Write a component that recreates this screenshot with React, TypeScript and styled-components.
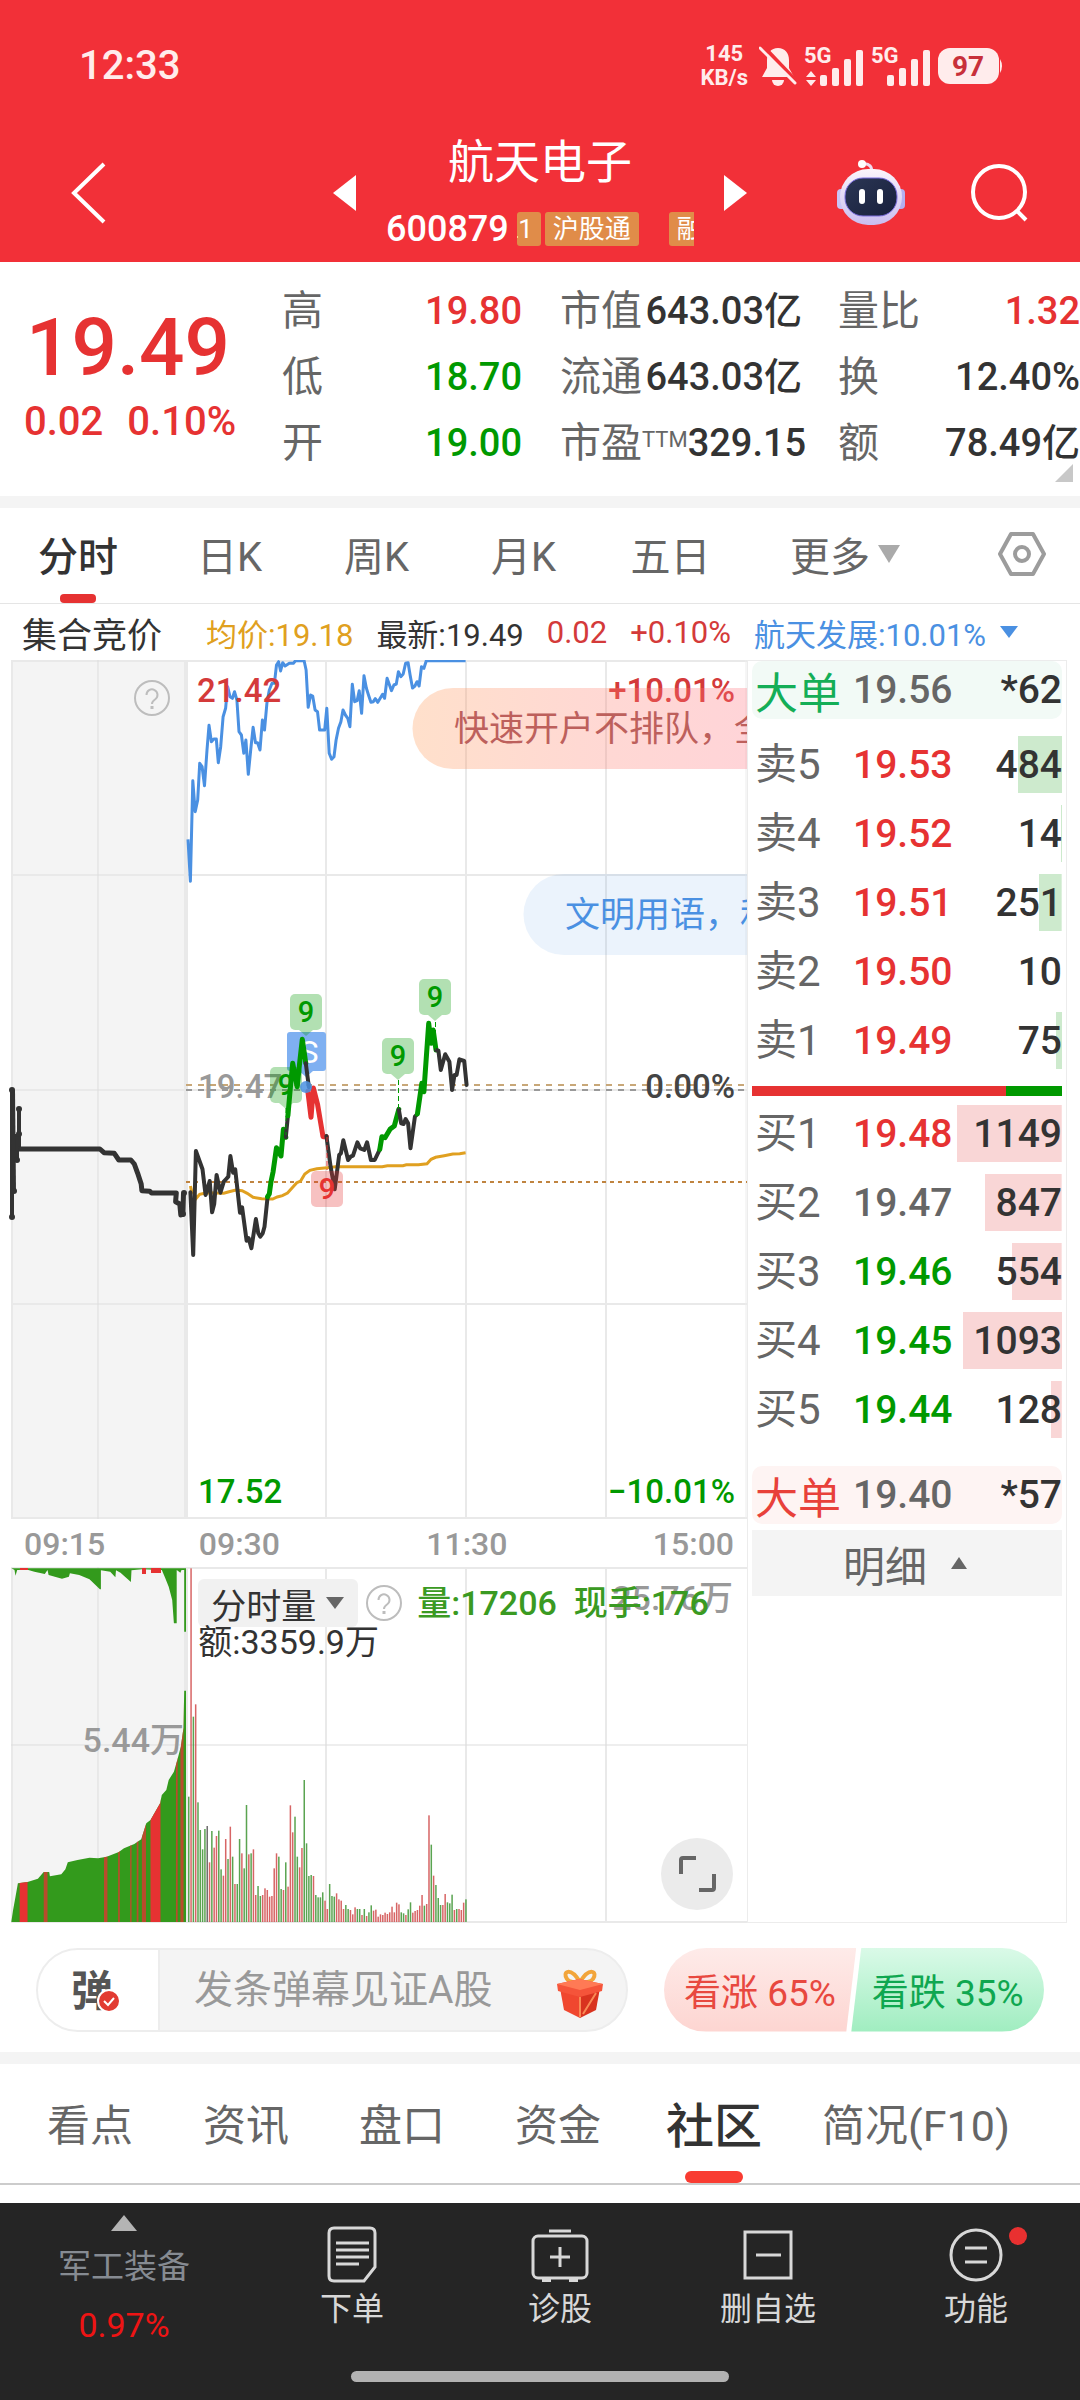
import React from "react";
import styled, { createGlobalStyle } from "styled-components";

const RED = "#e63232";
const GREEN = "#009900";
const INK = "#333333";
const GREY = "#666666";
const MUTED = "#999999";
const BLUE = "#4a90e2";

const Global = createGlobalStyle`
  *, *::before, *::after { box-sizing: border-box; }
  body { margin: 0; background: #fff; }
  body, button, input {
    font-family: Roboto, "Noto Sans CJK SC", sans-serif;
  }
  button { border: 0; padding: 0; margin: 0; background: none; color: inherit; cursor: pointer; }
  svg { display: block; }
`;

const Page = styled.div`
  width: 100%;
  color: ${INK};
  overflow: hidden;
`;

/* ---------- header ---------- */

const Header = styled.header`
  background: #f23038;
  color: #fff;
`;

const StatusBar = styled.div`
  height: 130px;
  display: flex;
  justify-content: space-between;
  align-items: center;
  padding: 2px 76px 0 79px;
`;

const Clock = styled.div`
  font-size: 40px;
  line-height: 40px;
  font-weight: 500;
  color: #ffecec;
`;

const StatusIcons = styled.div`
  display: flex;
  align-items: center;
  gap: 7px;
  color: #ffecec;
`;

const Speed = styled.div`
  font-size: 22px;
  line-height: 24px;
  font-weight: 700;
  text-align: center;
  margin-right: 4px;
`;

const NavBar = styled.div`
  height: 132px;
  display: grid;
  grid-template-columns: 1fr 414px 1fr;
  align-items: center;
  padding-bottom: 6px;
`;

const BackButton = styled.button`
  justify-self: start;
  padding-left: 70px;
`;

const Title = styled.div`
  display: flex;
  justify-content: space-between;
  align-items: center;
`;

const TitleText = styled.div`
  display: flex;
  flex-direction: column;
  align-items: center;
  gap: 22px;
  padding-bottom: 4px;
`;

const StockName = styled.h1`
  margin: 0;
  font-size: 46px;
  line-height: 54px;
  font-weight: 400;
`;

const CodeRow = styled.div`
  display: flex;
  align-items: center;
  gap: 8px;
  width: 308px;
`;

const Code = styled.span`
  font-size: 36px;
  line-height: 36px;
  font-weight: 500;
`;

const TagStrip = styled.div`
  flex: 1;
  min-width: 0;
  display: flex;
  align-items: center;
  overflow: hidden;
`;

const Tag = styled.span<{ $cut?: boolean; $gap?: boolean }>`
  flex: none;
  width: ${(p) => (p.$cut ? "24px" : "auto")};
  display: flex;
  justify-content: flex-end;
  overflow: hidden;
  margin-right: ${(p) => (p.$gap ? "30px" : "4px")};
  padding: 0 8px;
  border-radius: 3px;
  background: #e08c49;
  font-size: 26px;
  line-height: 34px;
`;

const NavActions = styled.div`
  display: flex;
  justify-content: flex-end;
  align-items: center;
  gap: 64px;
  padding-right: 50px;
`;

/* ---------- quote ---------- */

const Quote = styled.section`
  position: relative;
  display: grid;
  grid-template-columns:
    minmax(0, 282fr) minmax(0, 240fr) minmax(0, 38fr)
    minmax(0, 242fr) minmax(0, 36fr) minmax(0, 242fr);
  height: 234px;
  padding-top: 16px;
`;

const Last = styled.div`
  display: flex;
  flex-direction: column;
  padding: 24px 0 0 24px;
  color: ${RED};
`;

const LastPrice = styled.strong`
  width: 208px;
  text-align: center;
  font-size: 80px;
  line-height: 92px;
  font-weight: 500;
`;

const LastChange = styled.div`
  display: flex;
  gap: 24px;
  font-size: 40px;
  line-height: 56px;
  font-weight: 500;
`;

const Stats = styled.dl<{ $col: number }>`
  grid-column: ${(p) => p.$col};
  margin: 0;
  display: flex;
  flex-direction: column;
`;

const Stat = styled.div`
  display: flex;
  justify-content: space-between;
  align-items: center;
  height: 66px;
  white-space: nowrap;
  dt { font-size: 41px; line-height: 66px; color: ${GREY}; }
  sup { font-size: 22px; line-height: 22px; vertical-align: 10px; }
`;

const Value = styled.dd<{ $color?: string }>`
  margin: 0;
  font-size: 38px;
  line-height: 66px;
  font-weight: 500;
  color: ${(p) => p.$color ?? INK};
`;

const Corner = styled.i`
  position: absolute;
  right: 7px;
  bottom: 14px;
  border-left: 18px solid transparent;
  border-bottom: 18px solid #c8c8c8;
`;

const Divider = styled.div`
  height: 12px;
  background: #f4f4f4;
`;

/* ---------- period tabs ---------- */

const PeriodTabs = styled.nav`
  display: flex;
  height: 96px;
  border-bottom: 1px solid #e5e5e5;
`;

const PeriodTab = styled.button<{ $grow: number; $active?: boolean }>`
  flex: ${(p) => p.$grow} 1 0;
  min-width: 0;
  position: relative;
  display: flex;
  justify-content: center;
  align-items: center;
  gap: 8px;
  padding-bottom: 4px;
  font-size: 40px;
  font-weight: ${(p) => (p.$active ? 500 : 400)};
  color: ${(p) => (p.$active ? INK : GREY)};
  &::after {
    content: "";
    display: ${(p) => (p.$active ? "block" : "none")};
    position: absolute;
    bottom: 0;
    width: 36px;
    height: 9px;
    border-radius: 4px;
    background: ${RED};
  }
`;

const SettingsTab = styled(PeriodTab)`
  padding-left: 18px;
`;

const Triangle = styled.i<{ $w: number; $h: number; $color: string; $up?: boolean }>`
  display: inline-block;
  border-left: ${(p) => p.$w}px solid transparent;
  border-right: ${(p) => p.$w}px solid transparent;
  border-top: ${(p) => (p.$up ? "0" : `${p.$h}px solid ${p.$color}`)};
  border-bottom: ${(p) => (p.$up ? `${p.$h}px solid ${p.$color}` : "0")};
`;

const InfoRow = styled.div`
  display: flex;
  align-items: center;
  height: 56px;
  padding: 0 22px;
  font-size: 31px;
  white-space: nowrap;
`;

const InfoTitle = styled.span`
  font-size: 35px;
  width: 184px;
`;

const InfoItem = styled.span<{ $color?: string }>`
  color: ${(p) => p.$color ?? INK};
  margin-right: 23px;
`;

const PeerButton = styled.button`
  display: flex;
  align-items: center;
  gap: 14px;
  font-size: 31px;
  color: ${BLUE};
`;

/* ---------- main area ---------- */

const Main = styled.main`
  display: grid;
  grid-template-columns: minmax(0, 747fr) minmax(0, 333fr);
`;

const Charts = styled.div`
  display: flex;
  flex-direction: column;
`;

const ChartBox = styled.div`
  position: relative;
  > svg { width: 100%; height: auto; }
`;

const HelpCorner = styled.div`
  position: absolute;
  left: 18%;
  top: 20px;
`;

const TimeAxis = styled.div`
  display: grid;
  grid-template-columns: repeat(4, 1fr);
  height: 48px;
  line-height: 50px;
  font-size: 32px;
  font-weight: 500;
  color: ${MUTED};
`;

const Tick = styled.span<{ $align?: string }>`
  text-align: ${(p) => p.$align ?? "left"};
  padding: ${(p) => (p.$align === "right" ? "0 13px 0 0" : p.$align ? "0" : "0 0 0 12px")};
  &:first-child { padding-left: 24px; }
`;

const VolumeInfo = styled.div`
  position: absolute;
  left: 26%;
  top: 12px;
  font-size: 34px;
  line-height: 34px;
  white-space: nowrap;
`;

const VolumeLine = styled.div`
  display: flex;
  align-items: center;
  gap: 8px;
  height: 48px;
  color: #3a9a22;
  margin-left: 4px;
`;

const VolumeText = styled.span`
  margin: 0 2px 0 7px;
  font-weight: 500;
`;

const IndicatorButton = styled.button`
  display: flex;
  align-items: center;
  justify-content: space-between;
  width: 160px;
  height: 48px;
  padding: 0 14px 0 13px;
  border-radius: 6px;
  background: #f1f1f1;
  font-size: 35px;
  color: ${INK};
`;

const TurnoverLine = styled.div`
  margin: -2px 0 0 4px;
`;

const ExpandButton = styled.button`
  position: absolute;
  right: 14px;
  bottom: 13px;
  width: 72px;
  height: 72px;
  display: flex;
  align-items: center;
  justify-content: center;
  border-radius: 50%;
  background: #ebebeb;
`;

const BookBox = styled.aside`
  margin-right: 13px;
  padding: 0 4px;
  border: 1px solid #ececec;
`;

const BookTable = styled.table`
  width: 100%;
  border-collapse: collapse;
  table-layout: fixed;
`;

const BookRow = styled.tr`
  height: 69px;
`;

const Side = styled.th`
  width: 101px;
  padding: 0 0 0 3px;
  text-align: left;
  font-size: 42px;
  line-height: 56px;
  font-weight: 400;
  color: ${GREY};
`;

const Price = styled.td<{ $color: string }>`
  width: 101px;
  padding: 0;
  font-size: 39px;
  line-height: 56px;
  font-weight: 500;
  color: ${(p) => p.$color};
`;

const Qty = styled.td<{ $tint: string }>`
  padding: 0;
  text-align: right;
  font-size: 39px;
  line-height: 56px;
  font-weight: 500;
  color: ${INK};
  background: linear-gradient(${(p) => p.$tint}, ${(p) => p.$tint}) no-repeat right center;
`;

const BigOrder = styled.div<{ $bg: string; $color: string }>`
  display: flex;
  align-items: center;
  height: 58px;
  padding-left: 3px;
  border-radius: 10px;
  background: ${(p) => p.$bg};
  font-size: 39px;
  font-weight: 500;
  color: ${INK};
  b { width: 98px; font-size: 43px; font-weight: 400; color: ${(p) => p.$color}; }
  span { flex: 1; color: ${GREY}; }
  em { font-style: normal; }
`;

const Ratio = styled.div`
  display: flex;
  height: 10px;
  margin: 11px 0 3px;
  background: ${GREEN};
`;

const RatioBuy = styled.div`
  background: ${RED};
`;

const BookGap = styled.div<{ $h: number }>`
  height: ${(p) => p.$h}px;
`;

const DetailButton = styled.button`
  display: flex;
  align-items: center;
  justify-content: center;
  gap: 24px;
  width: 100%;
  height: 66px;
  margin-top: 6px;
  padding-right: 4px;
  background: #f4f4f4;
  font-size: 42px;
  color: ${GREY};
`;

/* ---------- comment bar ---------- */

const CommentBar = styled.section`
  display: flex;
  align-items: center;
  gap: 36px;
  height: 129px;
  padding: 4px 36px 0;
`;

const CommentPill = styled.div`
  flex: 590 1 0;
  min-width: 0;
  display: flex;
  height: 84px;
  border: 2px solid #ededed;
  border-radius: 42px;
  overflow: hidden;
  background: #f4f4f4;
`;

const DanmuToggle = styled.button`
  position: relative;
  width: 122px;
  flex: none;
  padding: 0 12px 4px 0;
  background: #fff;
  border-right: 2px solid #ededed;
  font-size: 42px;
  font-weight: 700;
  color: #555;
  svg { position: absolute; left: 59px; top: 39px; }
`;

const CommentInput = styled.input`
  flex: 1;
  min-width: 0;
  border: 0;
  outline: 0;
  padding: 0 0 0 34px;
  background: none;
  font-size: 39px;
  &::placeholder { color: ${MUTED}; opacity: 1; }
`;

const GiftButton = styled.button`
  padding: 8px 22px 0 0;
`;

const Vote = styled.div`
  flex: 382 1 0;
  display: flex;
  height: 84px;
  border-radius: 42px;
  overflow: hidden;
`;

const VoteUp = styled.button`
  flex: 1;
  margin-right: -5px;
  background: linear-gradient(#feebe9, #fdd5d1);
  clip-path: polygon(0 0, 100% 0, calc(100% - 10px) 100%, 0 100%);
  font-size: 37px;
  color: #e8483f;
`;

const VoteDown = styled(VoteUp)`
  margin: 0;
  background: linear-gradient(#dafae8, #a0edc0);
  clip-path: polygon(10px 0, 100% 0, 100% 100%, 0 100%);
  color: #0fa750;
`;

/* ---------- section tabs ---------- */

const SectionTabs = styled.nav`
  display: flex;
  height: 121px;
  padding: 0 40px 0 12px;
  border-bottom: 2px solid #cccccc;
`;

const SectionTab = styled.button<{ $active?: boolean; $grow: number }>`
  flex: ${(p) => p.$grow} 1 0;
  position: relative;
  display: flex;
  align-items: center;
  justify-content: center;
  padding-bottom: 3px;
  font-size: ${(p) => (p.$active ? 48 : 43)}px;
  font-weight: ${(p) => (p.$active ? 500 : 400)};
  color: ${(p) => (p.$active ? INK : GREY)};
  white-space: nowrap;
  &::after {
    content: "";
    display: ${(p) => (p.$active ? "block" : "none")};
    position: absolute;
    bottom: 0;
    width: 58px;
    height: 12px;
    border-radius: 6px;
    background: #f93c32;
  }
`;

/* ---------- bottom bar ---------- */

const BottomBar = styled.footer`
  margin-top: 18px;
  padding-bottom: 18px;
  background: #252525;
  color: #d8d8d8;
`;

const BottomItems = styled.div`
  display: grid;
  grid-template-columns: 248fr 208fr 208fr 208fr 208fr;
  height: 168px;
`;

const IndexButton = styled.button`
  display: flex;
  flex-direction: column;
  align-items: center;
  padding-top: 12px;
  font-size: 33px;
  line-height: 48px;
  color: #868b92;
  i { margin-bottom: 12px; }
`;

const IndexChange = styled.span`
  margin-top: 10px;
  font-size: 34px;
  line-height: 48px;
  color: #ee1414;
`;

const BottomButton = styled.button`
  position: relative;
  display: flex;
  flex-direction: column;
  align-items: center;
  gap: 2px;
  padding-top: 22px;
  font-size: 32px;
  line-height: 44px;
`;

const Dot = styled.i`
  position: absolute;
  left: 66%;
  top: 24px;
  width: 18px;
  height: 18px;
  border-radius: 50%;
  background: #e93030;
`;

const HomeBar = styled.div`
  width: 35%;
  height: 11px;
  margin: 0 auto;
  border-radius: 6px;
  background: #b2b2b2;
`;

/* ---------- chart data ---------- */

// Samples are "x,y" pairs on a fine grid: 2.904 units per px across, 3 per px down.
const UX = 2.904;
const UY = 3;
const line = (top: number, data: string) =>
  data
    .trim()
    .split(/\s+/)
    .map((p) => {
      const [x, y] = p.split(",").map(Number);
      return `${(x / UX).toFixed(1)},${(top + y / UY).toFixed(1)}`;
    })
    .join(" ");

const PEER = line(640, `546,598 553,724 560,422 567,515 574,480 580,370 587,380 594,437 601,330 607,256
614,305 621,297 628,297 634,368 641,320 648,230 655,205 661,140 668,170 675,175 681,155 688,180 694,275
701,285 708,340 714,300 721,403 728,330 735,262 742,308 748,308 755,330 762,240 768,270 775,190 782,150
790,130 797,130 803,75 809,65 815,93 821,68 828,78 840,70 852,70 858,62 883,62 889,90 895,202 902,165
908,168 915,210 922,215 928,270 943,270 949,205 956,340 963,358 970,350 976,300 983,265 990,245 996,210
1003,225 1010,235 1016,260 1023,133 1030,185 1037,182 1043,152 1050,220 1057,107 1064,145 1070,165
1077,187 1084,185 1090,176 1097,187 1104,175 1111,163 1117,175 1124,115 1131,135 1137,152 1144,135
1151,132 1157,95 1164,110 1171,102 1178,70 1185,68 1191,105 1198,144 1205,138 1211,125 1217,138 1224,80
1231,85 1238,62 1352,62`);

const AVERAGE = line(1000, `553,558 556,572 563,580 570,595 580,583 600,578 650,580 665,575 685,570 703,572
718,580 735,592 760,596 792,597 805,591 820,587 835,579 850,562 862,548 873,543 885,522 900,511 920,506
950,503 975,500 1110,500 1125,497 1170,497 1180,494 1215,494 1240,491 1252,478 1265,472 1290,467 1315,462
1335,461 1352,458`);

const PRICE_SEGMENTS: [string, string][] = [
  [INK, `553,577 561,765 569,453 588,508 597,585 609,543 616,637 622,612 629,525 640,578 650,545 657,537
    663,530 669,468 677,518 683,508 697,638 703,622 716,722 722,714 730,745 743,657 750,700 756,710 763,700
    768,680 777,590`],
  [GREEN, "777,590 782,582 787,545 793,515 803,443 816,468 823,388 830,412"],
  [INK, "830,412 836,347"],
  [GREEN, "836,347 843,265 850,190 863,260 870,190 878,118 888,190"],
  [INK, "888,190 897,262"],
  [RED, "894,275 903,352 910,264 922,312 938,410 948,410"],
  [INK, `948,408 960,500 972,568 985,465 990,460 997,421 1011,480 1018,470 1025,467 1038,427 1046,445
    1058,450 1066,427 1077,480 1088,480 1103,448`],
  [GREEN, "1103,448 1109,410 1118,413 1133,387 1145,378 1158,328"],
  [INK, "1158,328 1165,370 1172,372 1178,357 1185,370 1192,445 1205,350 1212,342"],
  [GREEN, "1212,342 1225,250 1231,275 1245,70 1252,130 1258,90 1266,150"],
  [INK, "1266,150 1273,152 1280,210 1293,163 1305,185 1313,270 1320,225 1326,225 1334,178 1348,183 1355,255"],
];

const AUCTION = line(1000, `55,447 290,447 302,458 332,460 345,480 380,480 390,492 400,520 410,552 412,572
435,574 440,579 512,579 510,605 522,612 525,645 531,643 533,579`);

const AUCTION_DOTS = [[12, 1090], [12, 1217], [14, 1191], [17, 1160], [19, 1134], [19, 1109], [184, 1193], [183, 1214]];

const AUCTION_VOLUME = line(1460, `33,1386 33,1384 38,1350 45,1310 52,1270 80,1266 110,1256 127,1236 143,1236
145,1249 178,1243 190,1228 197,1207 225,1200 260,1193 285,1195 310,1190 345,1176 360,1165 390,1152 410,1138
425,1090 437,1080 465,1030 470,1005 483,990 490,960 505,935 515,900 525,860 533,803 535,692 540,692 540,1386`);

const AUCTION_UNMATCHED = line(1460, `33,325 42,330 45,347 50,330 80,329 100,335 130,342 138,330 141,345 180,356
200,350 203,340 230,345 260,358 290,388 293,388 293,331 320,335 335,352 337,331 350,338 380,366 382,331
412,328 470,330 480,355 490,380 500,420 505,490 513,490 513,330 524,338 527,330 535,330 535,515 540,515 540,325`);

const RED_STRIPES = [[57, 80], [127, 138], [302, 312], [343, 348], [378, 382], [397, 402], [412, 424], [437, 466], [511, 516], [524, 533]];

const VOLUME = `1010g 325r 770g 733r 1027g 1110g 1168g 1107g 1098k 1207r 1113g 1163r 1128r 1112g 1228g 1247r
1137r 1197g 1100r 1190g 1272r 1272g 1137g 1180r 1225g 1035g 1183r 1180g 1168r 1305r 1278g 1308g 1305r 1285r
1290r 1310r 1308r 1225r 1180r 1190g 1287g 1290r 1207g 1280r 1036r 1117r 1070g 1190g 1222r 1164r 960g 1150g
1248g 1245g 1248r 1305g 1312g 1312g 1297g 1322r 1347r 1272g 1308g 1310g 1300r 1318r 1322r 1347r 1335g 1347g
1350r 1363r 1342r 1347g 1347g 1365r 1347g 1368r 1357g 1336g 1352r 1349r 1370r 1363r 1365r 1358r 1362r 1357r
1340r 1357r 1328r 1333r 1357g 1360g 1365r 1348g 1327g 1358r 1353r 1350r 1337r 1305r 1337g 1332r 1066r 1154g
1247r 1275g 1314g 1335g 1335r 1302r 1327g 1330g 1304g 1350r 1347g 1347r 1350r 1328r 1318g`
  .split(/\s+/)
  .map((v) => ({ top: 1460 + parseInt(v, 10) / UY, tone: v.slice(-1) }));

const VOLUME_TONES: Record<string, string> = { r: "#d04a4a", g: "#3d9432", k: "#555555" };

/* ---------- charts ---------- */

const GRID_X = [12, 326, 466, 606];

function NineMark({ x, y, tone = GREEN, plain }: { x: number; y: number; tone?: string; plain?: boolean }) {
  return (
    <g>
      <rect x={x} y={y} width="32" height="36" rx="5" fill={tone} opacity=".3" />
      {!plain && <path d={`M${x + 9} ${y + 36}h14l-7 6z`} fill={tone} opacity=".3" />}
      <text x={x + 16} y={y + 28} textAnchor="middle" fontSize="29" fontWeight="500" fill={tone}>9</text>
    </g>
  );
}

function PriceChart() {
  return (
    <svg viewBox="0 660 747 859" fontFamily='Roboto, "Noto Sans CJK SC", sans-serif' fontSize="33" fontWeight="500">
      <defs>
        <linearGradient id="promo" x1="0" x2="1">
          <stop offset="0" stopColor="#ff9852" />
          <stop offset=".5" stopColor="#ff806c" />
          <stop offset="1" stopColor="#ff707d" />
        </linearGradient>
      </defs>
      <rect x="11" y="660" width="176" height="859" fill="#f4f4f4" />
      <g stroke="#e9e9e9" strokeWidth="2">
        {GRID_X.map((x) => <path key={x} d={`M${x} 660V1519`} />)}
        {[661, 875, 1090, 1304, 1518].map((y) => <path key={y} d={`M11 ${y}H747`} />)}
        <path d="M186 660V1519" strokeWidth="4" />
        <path d="M98 660V1519" stroke="#dddddd" strokeWidth="1" />
        <path d="M746 660V1519" stroke="#ececec" strokeWidth="1" />
      </g>
      <path d="M186 1085H747" stroke="#c8a778" strokeWidth="2" strokeDasharray="6 6" />
      <path d="M186 1090H747" stroke="#999" strokeWidth="2" strokeDasharray="6 6" />
      <path d="M186 1182H747" stroke="#c08440" strokeWidth="2" strokeDasharray="4 4" />

      <polyline points={PEER} fill="none" stroke={BLUE} strokeWidth="3" strokeLinejoin="round" />
      <text x="197" y="702" fill="#d43a3a">21.42</text>
      <text x="735" y="702" textAnchor="end" fill="#d43a3a">+10.01%</text>
      <text x="198" y="1098" fill={MUTED}>19.47</text>
      <text x="735" y="1098" textAnchor="end" fill="#444">0.00%</text>
      <text x="198" y="1503" fill={GREEN}>17.52</text>
      <text x="735" y="1503" textAnchor="end" fill={GREEN}>−10.01%</text>

      <g fontSize="35" fontWeight="400">
        <path d="M747 688H453a40 40 0 0 0 0 81H747z" fill="url(#promo)" opacity=".3" />
        <text x="454" y="741" fill="#bd605c">快速开户不排队，全</text>
        <path d="M747 874H564a40 40 0 0 0 0 81H747z" fill={BLUE} opacity=".11" />
        <text x="565" y="927" fill={BLUE}>文明用语，和</text>
      </g>

      <polyline points={AVERAGE} fill="none" stroke="#e0a020" strokeWidth="3" />
      <g stroke={INK} fill="none">
        <path d="M12 1090V1217M17 1134V1160M19 1109V1149" strokeWidth="4" />
        <path d="M13 1090L14 1191" strokeWidth="4" />
        <polyline points={AUCTION} strokeWidth="5" strokeLinejoin="round" />
      </g>
      {AUCTION_DOTS.map(([x, y]) => <circle key={`${x}-${y}`} cx={x} cy={y} r="3" fill={INK} />)}

      <rect x="287" y="1032" width="39" height="39" rx="3" fill="#7fb0f1" />
      <path d="M299 1071h14l-7 6z" fill="#7fb0f1" />
      <text x="309" y="1063" textAnchor="middle" fontSize="32" fontWeight="400" fill="#fff">S</text>
      <NineMark x={270} y={1067} />
      {PRICE_SEGMENTS.map(([color, data], i) => (
        <polyline
          key={i}
          points={line(1000, data)}
          fill="none"
          stroke={color}
          strokeWidth={color === INK ? 4 : 5}
          strokeLinejoin="round"
          strokeLinecap="round"
        />
      ))}
      <circle cx="306" cy="1087" r="6" fill={BLUE} opacity=".85" />
      <NineMark x={290} y={994} />
      <NineMark x={382} y={1038} />
      <NineMark x={419} y={979} />
      <NineMark x={311} y={1171} tone={RED} plain />
      <g strokeWidth="1" strokeDasharray="5 3" stroke={GREEN}>
        <path d="M398.500 1080V1110M435.500 1022V1050M286 1108V1135" />
        <path d="M327 1137V1170" stroke={RED} />
      </g>
    </svg>
  );
}

function VolumeChart() {
  return (
    <svg viewBox="0 1567 747 356" fontFamily='Roboto, "Noto Sans CJK SC", sans-serif' fontSize="34" fontWeight="500">
      <defs>
        <clipPath id="auction"><polygon points={AUCTION_VOLUME} /></clipPath>
      </defs>
      <rect x="11" y="1567" width="176" height="355" fill="#f4f4f4" />
      <g stroke="#e9e9e9" strokeWidth="2">
        {GRID_X.map((x) => <path key={x} d={`M${x} 1567V1922`} />)}
        <path d="M11 1568H747M11 1922H747" />
        <path d="M186 1567V1922" strokeWidth="4" />
        <path d="M98 1567V1922M11 1745H747" stroke="#dddddd" strokeWidth="1" />
      </g>
      <polygon points={AUCTION_VOLUME} fill="#339a1c" />
      <g clipPath="url(#auction)" fill={RED}>
        {RED_STRIPES.map(([a, b]) => (
          <rect key={a} x={a / UX} y="1650" width={(b - a) / UX} height="272" opacity={b - a < 15 ? 0.75 : 1} />
        ))}
      </g>
      <polygon points={AUCTION_UNMATCHED} fill="#339a1c" />
      <path d="M142 1568h4v6h-4zM151 1568h10v5h-10zM20 1568h8v2h-8z" fill={RED} />
      <text x="184" y="1752" textAnchor="end" fill={MUTED}>5.44万</text>
      <text x="733" y="1610" textAnchor="end" fill={MUTED}>25.76万</text>
      {VOLUME.map((bar, i) => (
        <rect
          key={i}
          x={188 + i * 2.31}
          y={bar.top}
          width="1.500"
          height={1922 - bar.top}
          fill={VOLUME_TONES[bar.tone]}
          opacity=".85"
        />
      ))}
    </svg>
  );
}

function HelpIcon() {
  return (
    <svg width="36" height="36" viewBox="0 0 36 36" fill="none" stroke="#bdbdbd" strokeWidth="2">
      <circle cx="18" cy="18" r="17" />
      <path d="M12.500 15a5.500 5.500 0 1 1 8.500 4.500c-2 1.300-3 2-3 4.500" />
      <path d="M18 26v3" strokeWidth="3" />
    </svg>
  );
}

/* ---------- icons ---------- */

function Signal({ arrows }: { arrows?: boolean }) {
  return (
    <svg width="60" height="42" viewBox="0 0 60 42" fill="currentColor">
      <text x="0" y="18" fontSize="22" fontWeight="700" fontFamily="Roboto, sans-serif">5G</text>
      {arrows && <path d="M7 26l5 6H2zM7 41l5-6H2z" />}
      <rect x="16" y="30" width="7" height="11" rx="2" />
      <rect x="28" y="23" width="7" height="18" rx="2" />
      <rect x="40" y="14" width="7" height="27" rx="2" />
      <rect x="52" y="5" width="7" height="36" rx="2" />
    </svg>
  );
}

function Muted() {
  return (
    <svg width="38" height="42" viewBox="0 0 38 42">
      <path d="M19 3c7 0 11 5 11 12v8l5 9H3l5-9v-8C8 8 12 3 19 3z" fill="currentColor" />
      <path d="M13 35h12a6 6 0 0 1-12 0z" fill="currentColor" />
      <path d="M3 0L38 37" stroke="#f23038" strokeWidth="4" />
      <path d="M1 3L36 38" stroke="currentColor" strokeWidth="3" strokeLinecap="round" />
    </svg>
  );
}

function Battery() {
  return (
    <svg width="66" height="36" viewBox="0 0 66 36">
      <rect x="0" y="0" width="61" height="36" rx="12" fill="currentColor" />
      <path d="M62 11q4 7 0 14z" fill="currentColor" />
      <text x="30" y="28" textAnchor="middle" fontSize="28" fontWeight="700" fontFamily="Roboto, sans-serif" fill="#c8303a">97</text>
    </svg>
  );
}

function Robot() {
  return (
    <svg width="70" height="68" viewBox="0 0 70 68">
      <defs>
        <linearGradient id="shell" x1="0" y1="0" x2="0" y2="1">
          <stop offset="0" stopColor="#fbf4fb" />
          <stop offset="1" stopColor="#c9bdf0" />
        </linearGradient>
        <linearGradient id="visor" x1="0" y1="0" x2="1" y2="1">
          <stop offset="0" stopColor="#2b3654" />
          <stop offset="1" stopColor="#18203c" />
        </linearGradient>
      </defs>
      <path d="M35 14c2-6-2-10-8-9" fill="none" stroke="#f0dcf0" strokeWidth="3" />
      <circle cx="26" cy="5" r="4" fill="#fff" />
      <rect x="1" y="30" width="9" height="20" rx="4" fill="#c9c4f6" />
      <rect x="60" y="30" width="9" height="20" rx="4" fill="#b4aff0" />
      <rect x="4" y="10" width="62" height="56" rx="28" fill="url(#shell)" />
      <rect x="9" y="19" width="52" height="38" rx="18" fill="url(#visor)" stroke="#7c6fe0" strokeWidth="1" />
      <rect x="23" y="30" width="6" height="15" rx="3" fill="#fff" />
      <rect x="41" y="30" width="6" height="15" rx="3" fill="#fff" />
    </svg>
  );
}

function Gift() {
  return (
    <svg width="48" height="52" viewBox="0 0 48 52">
      <path d="M24 14C14-2 6 4 11 11c2 3 8 4 13 3 5 1 11 0 13-3 5-7-3-13-13 3z" fill="none" stroke="#f2a53a" strokeWidth="4" />
      <path d="M4 20l20 6v24L8 42z" fill="#f0472f" />
      <path d="M44 20l-20 6v24l16-8z" fill="#d9331f" />
      <path d="M1 16l22-5 24 5-1 7-22 6-22-6z" fill="#f5543a" />
      <path d="M1 16l22-5 24 5-23 6z" fill="#ff7a55" />
      <path d="M24 29v20M40 25L27 46" stroke="#f98a55" strokeWidth="2" />
    </svg>
  );
}

const asks = [
  { side: "卖5", price: "19.53", qty: 484, color: RED },
  { side: "卖4", price: "19.52", qty: 14, color: RED },
  { side: "卖3", price: "19.51", qty: 251, color: RED },
  { side: "卖2", price: "19.50", qty: 10, color: RED },
  { side: "卖1", price: "19.49", qty: 75, color: RED },
];

const bids = [
  { side: "买1", price: "19.48", qty: 1149, color: RED },
  { side: "买2", price: "19.47", qty: 847, color: GREY },
  { side: "买3", price: "19.46", qty: 554, color: GREEN },
  { side: "买4", price: "19.45", qty: 1093, color: GREEN },
  { side: "买5", price: "19.44", qty: 128, color: GREEN },
];

function Levels({ rows, tint }: { rows: typeof asks; tint: string }) {
  return (
    <BookTable>
      <tbody>
        {rows.map((r) => (
          <BookRow key={r.side}>
            <Side scope="row">{r.side}</Side>
            <Price $color={r.color}>{r.price}</Price>
            <Qty $tint={tint} style={{ backgroundSize: `${Math.floor(r.qty / 11.8)}% 57px` }}>{r.qty}</Qty>
          </BookRow>
        ))}
      </tbody>
    </BookTable>
  );
}

export default function App() {
  return (
    <Page>
      <Global />
      <Header>
        <StatusBar>
          <Clock>12:33</Clock>
          <StatusIcons>
            <Speed>145<br />KB/s</Speed>
            <Muted />
            <Signal arrows />
            <Signal />
            <Battery />
          </StatusIcons>
        </StatusBar>
        <NavBar>
          <BackButton aria-label="返回">
            <svg width="36" height="64" viewBox="0 0 36 64" fill="none" stroke="#fff" strokeWidth="4">
              <path d="M34 3L4 32l30 29" />
            </svg>
          </BackButton>
          <Title>
            <button aria-label="上一只">
              <svg width="23" height="36" viewBox="0 0 23 36"><path d="M23 0v36L0 18z" fill="#fff" /></svg>
            </button>
            <TitleText>
              <StockName>航天电子</StockName>
              <CodeRow>
                <Code>600879</Code>
                <TagStrip>
                  <Tag $cut>L1</Tag>
                  <Tag $gap>沪股通</Tag>
                  <Tag>融</Tag>
                </TagStrip>
              </CodeRow>
            </TitleText>
            <button aria-label="下一只">
              <svg width="23" height="36" viewBox="0 0 23 36"><path d="M0 0v36l23-18z" fill="#fff" /></svg>
            </button>
          </Title>
          <NavActions>
            <button aria-label="智能助手"><Robot /></button>
            <button aria-label="搜索">
              <svg width="60" height="60" viewBox="0 0 60 60" fill="none" stroke="#fff" strokeWidth="4">
                <circle cx="29" cy="29" r="26" />
                <path d="M46 47l10 10" />
              </svg>
            </button>
          </NavActions>
        </NavBar>
      </Header>

      <Quote>
        <Last>
          <LastPrice>19.49</LastPrice>
          <LastChange><span>0.02</span><span>0.10%</span></LastChange>
        </Last>
        <Stats $col={2}>
          <Stat><dt>高</dt><Value $color={RED}>19.80</Value></Stat>
          <Stat><dt>低</dt><Value $color={GREEN}>18.70</Value></Stat>
          <Stat><dt>开</dt><Value $color={GREEN}>19.00</Value></Stat>
        </Stats>
        <Stats $col={4}>
          <Stat><dt>市值</dt><Value>643.03亿</Value></Stat>
          <Stat><dt>流通</dt><Value>643.03亿</Value></Stat>
          <Stat><dt>市盈<sup>TTM</sup></dt><Value>329.15</Value></Stat>
        </Stats>
        <Stats $col={6}>
          <Stat><dt>量比</dt><Value $color={RED}>1.32</Value></Stat>
          <Stat><dt>换</dt><Value>12.40%</Value></Stat>
          <Stat><dt>额</dt><Value>78.49亿</Value></Stat>
        </Stats>
        <Corner />
      </Quote>
      <Divider />

      <PeriodTabs>
        <PeriodTab $grow={156} $active>分时</PeriodTab>
        <PeriodTab $grow={147}>日K</PeriodTab>
        <PeriodTab $grow={147}>周K</PeriodTab>
        <PeriodTab $grow={147}>月K</PeriodTab>
        <PeriodTab $grow={147}>五日</PeriodTab>
        <PeriodTab $grow={202}>更多<Triangle $w={11} $h={18} $color="#aaaaaa" /></PeriodTab>
        <SettingsTab $grow={116} aria-label="设置">
          <svg width="48" height="46" viewBox="0 0 48 46" fill="none" stroke="#9c9c9c" strokeWidth="4">
            <path d="M13 3h22l11 20-11 20H13L2 23z" strokeLinejoin="round" />
            <circle cx="24" cy="23" r="7" />
          </svg>
        </SettingsTab>
      </PeriodTabs>

      <InfoRow>
        <InfoTitle>集合竞价</InfoTitle>
        <InfoItem $color="#e0a020">均价:19.18</InfoItem>
        <InfoItem>最新:19.49</InfoItem>
        <InfoItem $color="#d43a3a">0.02</InfoItem>
        <InfoItem $color="#d43a3a">+0.10%</InfoItem>
        <PeerButton>航天发展:10.01%<Triangle $w={9} $h={12} $color={BLUE} /></PeerButton>
      </InfoRow>

      <Main>
        <Charts>
          <ChartBox>
            <PriceChart />
            <HelpCorner><button aria-label="集合竞价说明"><HelpIcon /></button></HelpCorner>
          </ChartBox>
          <TimeAxis>
            <Tick>09:15</Tick>
            <Tick>09:30</Tick>
            <Tick $align="center">11:30</Tick>
            <Tick $align="right">15:00</Tick>
          </TimeAxis>
          <ChartBox>
            <VolumeChart />
            <VolumeInfo>
              <VolumeLine>
                <IndicatorButton>分时量<Triangle $w={9} $h={12} $color="#666666" /></IndicatorButton>
                <button aria-label="分时量说明"><HelpIcon /></button>
                <VolumeText>量:17206</VolumeText>
                <VolumeText>现手:176</VolumeText>
              </VolumeLine>
              <TurnoverLine>额:3359.9万</TurnoverLine>
            </VolumeInfo>
            <ExpandButton aria-label="全屏">
              <svg width="40" height="40" viewBox="0 0 40 40" fill="none" stroke="#666" strokeWidth="4">
                <path d="M4 20V6q0-2 2-2h13M37 20v14q0 2-2 2H22" />
              </svg>
            </ExpandButton>
          </ChartBox>
        </Charts>

        <BookBox>
          <BigOrder $bg="#f2faf6" $color="#14ae57"><b>大单</b><span>19.56</span><em>*62</em></BigOrder>
          <BookGap $h={11} />
          <Levels rows={asks} tint="#cdeacd" />
          <Ratio><RatioBuy style={{ width: "82%" }} /></Ratio>
          <Levels rows={bids} tint="#f9d6d6" />
          <BookGap $h={22} />
          <BigOrder $bg="#fef4f3" $color="#e8413a"><b>大单</b><span>19.40</span><em>*57</em></BigOrder>
          <DetailButton>明细<Triangle $w={8} $h={12} $color="#666666" $up /></DetailButton>
        </BookBox>
      </Main>

      <CommentBar>
        <CommentPill>
          <DanmuToggle aria-label="弹幕开关">
            弹
            <svg width="24" height="24" viewBox="0 0 24 24">
              <circle cx="12" cy="12" r="11" fill="#e23b32" stroke="#fff" strokeWidth="2" />
              <path d="M7 12l4 4 6-7" fill="none" stroke="#fff" strokeWidth="2" />
            </svg>
          </DanmuToggle>
          <CommentInput aria-label="发弹幕" placeholder="发条弹幕见证A股" />
          <GiftButton aria-label="礼物"><Gift /></GiftButton>
        </CommentPill>
        <Vote>
          <VoteUp>看涨 65%</VoteUp>
          <VoteDown>看跌 35%</VoteDown>
        </Vote>
      </CommentBar>
      <Divider />

      <SectionTabs>
        <SectionTab $grow={156}>看点</SectionTab>
        <SectionTab $grow={156}>资讯</SectionTab>
        <SectionTab $grow={156}>盘口</SectionTab>
        <SectionTab $grow={156}>资金</SectionTab>
        <SectionTab $grow={156} $active>社区</SectionTab>
        <SectionTab $grow={248}>简况(F10)</SectionTab>
      </SectionTabs>

      <BottomBar>
        <BottomItems>
          <IndexButton>
            <Triangle $w={13} $h={16} $color="#b4b4b4" $up />
            军工装备
            <IndexChange>0.97%</IndexChange>
          </IndexButton>
          <BottomButton>
            <svg width="60" height="60" viewBox="0 0 60 60" fill="none" stroke="currentColor" strokeWidth="3">
              <path d="M12 3h36q5 0 5 5v34l-11 14H12q-5 0-5-5V8q0-5 5-5z" />
              <path d="M14 18h33M14 25h33M14 32h33M14 39h23" />
            </svg>
            下单
          </BottomButton>
          <BottomButton>
            <svg width="60" height="60" viewBox="0 0 60 60" fill="none" stroke="currentColor" strokeWidth="3">
              <rect x="3" y="11" width="54" height="42" rx="5" />
              <path d="M19 6h22M30 22v20M20 32h20" />
              <path d="M12 55h9M39 55h9" strokeWidth="4" />
            </svg>
            诊股
          </BottomButton>
          <BottomButton>
            <svg width="60" height="60" viewBox="0 0 60 60" fill="none" stroke="currentColor" strokeWidth="3">
              <rect x="7" y="7" width="46" height="46" />
              <path d="M18 30h25" />
            </svg>
            删自选
          </BottomButton>
          <BottomButton>
            <svg width="60" height="60" viewBox="0 0 60 60" fill="none" stroke="currentColor" strokeWidth="3">
              <circle cx="30" cy="30" r="25" />
              <path d="M19 23h22M19 37h22" />
            </svg>
            功能
            <Dot />
          </BottomButton>
        </BottomItems>
        <HomeBar />
      </BottomBar>
    </Page>
  );
}
